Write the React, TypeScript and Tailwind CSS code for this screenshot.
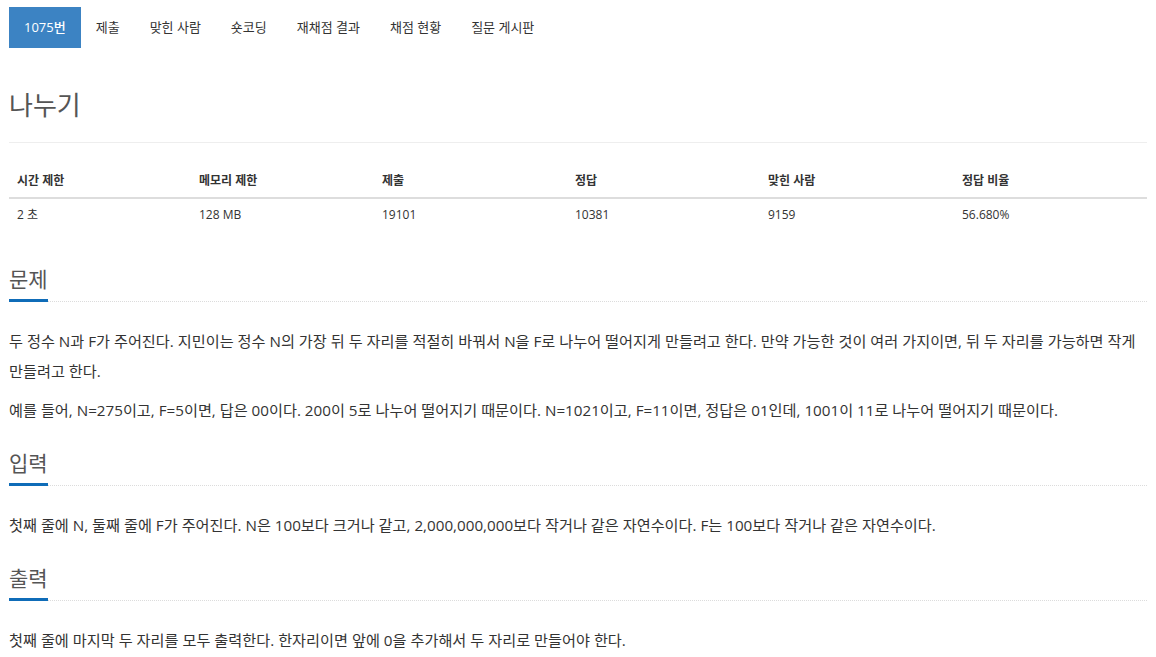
const NAV_ITEMS = ["제출", "맞힌 사람", "숏코딩", "재채점 결과", "채점 현황", "질문 게시판"];

const STATS = [
  { label: "시간 제한", value: "2 초", width: "w-[182px]" },
  { label: "메모리 제한", value: "128 MB", width: "w-[183px]" },
  { label: "제출", value: "19101", width: "w-[193px]" },
  { label: "정답", value: "10381", width: "w-[193px]" },
  { label: "맞힌 사람", value: "9159", width: "w-[194px]" },
  { label: "정답 비율", value: "56.680%", width: "" },
];

function SectionHeadline({ title }: { title: string }) {
  return (
    <div className="flex border-b border-dotted border-[#dcdcdc]">
      <h2 className="-mb-px border-b-[3px] border-[#0f6cb8] pb-[5px] text-[21px] leading-[30px] font-normal text-[#555]">
        {title}
      </h2>
    </div>
  );
}

function Section({
  title,
  children,
}: {
  title: string;
  children: React.ReactNode;
}) {
  return (
    <section className="mt-[23px]">
      <SectionHeadline title={title} />
      <div className="mt-[24px] text-[15.2px] leading-[30px] text-[#333]">
        {children}
      </div>
    </section>
  );
}

export default function App() {
  return (
    <div
      className="min-h-[657px] bg-white px-[9px] pt-[7px]"
      style={{ fontFamily: '"Open Sans", "Noto Sans CJK KR", sans-serif' }}
    >
      <ul className="flex h-[41px] text-[13px]">
        <li className="flex items-center bg-[#3c83c3] px-[15px] font-medium text-white">
          1075번
        </li>
        {NAV_ITEMS.map((item) => (
          <li key={item} className="flex items-center px-[15px] text-[#333]">
            {item}
          </li>
        ))}
      </ul>

      <div className="mt-[39px] border-b border-[#eee] pb-[19px]">
        <h1 className="text-[26px] leading-[36px] font-normal text-[#555]">
          나누기
        </h1>
      </div>

      <table className="mt-[22px] mb-[33px] w-full text-left text-[12px] text-[#333]">
        <thead>
          <tr className="border-b-2 border-[#ddd]">
            {STATS.map((s) => (
              <th key={s.label} className={`${s.width} px-2 pt-[7px] pb-[7px] font-bold leading-[18px]`}>
                {s.label}
              </th>
            ))}
          </tr>
        </thead>
        <tbody>
          <tr>
            {STATS.map((s) => (
              <td key={s.label} className="px-2 py-[7px] leading-[18px]">
                {s.value}
              </td>
            ))}
          </tr>
        </tbody>
      </table>

      <Section title="문제">
        <p>
          두 정수 N과 F가 주어진다. 지민이는 정수 N의 가장 뒤 두 자리를 적절히 바꿔서 N을 F로 나누어 떨어지게 만들려고 한다. 만약 가능한 것이 여러 가지이면, 뒤 두 자리를 가능하면 작게 만들려고 한다.
        </p>
        <p className="mt-[9px]">
          예를 들어, N=275이고, F=5이면, 답은 00이다. 200이 5로 나누어 떨어지기 때문이다. N=1021이고, F=11이면, 정답은 01인데, 1001이 11로 나누어 떨어지기 때문이다.
        </p>
      </Section>

      <Section title="입력">
        <p>
          첫째 줄에 N, 둘째 줄에 F가 주어진다. N은 100보다 크거나 같고, 2,000,000,000보다 작거나 같은 자연수이다. F는 100보다 작거나 같은 자연수이다.
        </p>
      </Section>

      <Section title="출력">
        <p>
          첫째 줄에 마지막 두 자리를 모두 출력한다. 한자리이면 앞에 0을 추가해서 두 자리로 만들어야 한다.
        </p>
      </Section>
    </div>
  );
}
